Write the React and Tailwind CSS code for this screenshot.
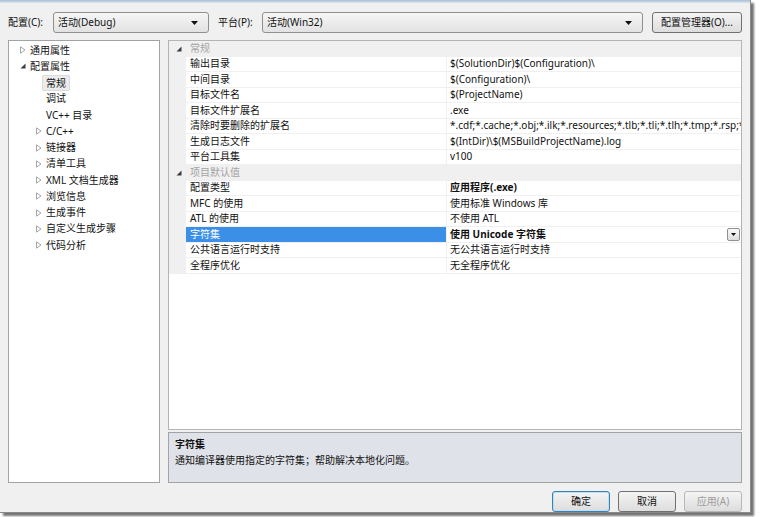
const FONT = { fontFamily: '"Noto Sans", "Noto Sans CJK SC", sans-serif' };

function Collapsed() {
  return (
    <svg width="6" height="8" viewBox="0 0 6 8" className="shrink-0">
      <path d="M0.5 0.8 L5 4 L0.5 7.2 Z" fill="#fff" stroke="#a6a6a6" strokeWidth="1" />
    </svg>
  );
}

function Expanded() {
  return (
    <svg width="6" height="6" viewBox="0 0 6 6" className="shrink-0">
      <path d="M5.5 0.5 L5.5 5.5 L0.5 5.5 Z" fill="#3c3c3c" />
    </svg>
  );
}

function DownArrow() {
  return (
    <svg width="7" height="4" viewBox="0 0 7 4">
      <path d="M0 0 L7 0 L3.5 4 Z" fill="#111" />
    </svg>
  );
}

function Combo({ width, text }) {
  return (
    <div
      className={`${width} h-[21px] flex items-center justify-between rounded-[3px] border border-[#8f9091] bg-gradient-to-b from-[#f6f6f6] to-[#e2e2e2] pl-[4px] pr-[10px] text-[10px] text-[#111]`}
    >
      <span>{text}</span>
      <DownArrow />
    </div>
  );
}

const tree = [
  { label: '通用属性', level: 0, icon: 'c' },
  { label: '配置属性', level: 0, icon: 'e' },
  { label: '常规', level: 1, selected: true },
  { label: '调试', level: 1 },
  { label: 'VC++ 目录', level: 1 },
  { label: 'C/C++', level: 1, icon: 'c' },
  { label: '链接器', level: 1, icon: 'c' },
  { label: '清单工具', level: 1, icon: 'c' },
  { label: 'XML 文档生成器', level: 1, icon: 'c' },
  { label: '浏览信息', level: 1, icon: 'c' },
  { label: '生成事件', level: 1, icon: 'c' },
  { label: '自定义生成步骤', level: 1, icon: 'c' },
  { label: '代码分析', level: 1, icon: 'c' },
];

const grid = [
  { cat: '常规' },
  { name: '输出目录', value: '$(SolutionDir)$(Configuration)\\' },
  { name: '中间目录', value: '$(Configuration)\\' },
  { name: '目标文件名', value: '$(ProjectName)' },
  { name: '目标文件扩展名', value: '.exe' },
  {
    name: '清除时要删除的扩展名',
    value: '*.cdf;*.cache;*.obj;*.ilk;*.resources;*.tlb;*.tli;*.tlh;*.tmp;*.rsp;*.pgc;*.pgd;*.meta;$(TargetPath)',
  },
  { name: '生成日志文件', value: '$(IntDir)\\$(MSBuildProjectName).log' },
  { name: '平台工具集', value: 'v100' },
  { cat: '项目默认值' },
  { name: '配置类型', value: '应用程序(.exe)', bold: true },
  { name: 'MFC 的使用', value: '使用标准 Windows 库' },
  { name: 'ATL 的使用', value: '不使用 ATL' },
  { name: '字符集', value: '使用 Unicode 字符集', bold: true, selected: true },
  { name: '公共语言运行时支持', value: '无公共语言运行时支持' },
  { name: '全程序优化', value: '无全程序优化' },
];

function TreeRow({ item }) {
  const indent = item.level === 0 ? 'pl-[11px]' : 'pl-[27px]';
  return (
    <div className={`h-[16.25px] flex items-center ${indent}`}>
      <div className="w-[10px] flex items-center">
        {item.icon === 'c' && <Collapsed />}
        {item.icon === 'e' && <Expanded />}
      </div>
      {item.selected ? (
        <span className="-ml-[4px] rounded-[2px] border border-[#dadada] bg-[#ececec] px-[3px] leading-[14px]">
          {item.label}
        </span>
      ) : (
        <span>{item.label}</span>
      )}
    </div>
  );
}

function GridRow({ row }) {
  if (row.cat) {
    return (
      <div className="h-[15.5px] flex items-center bg-[#f0f0f0]">
        <div className="w-[17px] flex items-center justify-center pl-[2px]">
          <Expanded />
        </div>
        <span className="pl-[4px] text-[#a3a3a3]">{row.cat}</span>
      </div>
    );
  }
  return (
    <div className="h-[15.5px] flex bg-[#f0f0f0]">
      <div className="w-[17px] shrink-0" />
      <div
        className={`w-[260px] shrink-0 flex items-center pl-[4px] border-b border-[#f0f0f0] ${
          row.selected ? 'bg-[#3b8fe6] text-white' : 'bg-white'
        }`}
      >
        {row.name}
      </div>
      <div
        className={`flex-1 min-w-0 flex items-center pl-[3px] border-b border-l border-[#f0f0f0] bg-white overflow-hidden whitespace-nowrap ${
          row.bold ? 'font-bold' : ''
        }`}
      >
        <span className="flex-1 overflow-hidden">{row.value}</span>
        {row.selected && (
          <div className="mr-[1px] h-[13px] w-[13px] shrink-0 flex items-center justify-center rounded-[2px] border border-[#8f9091] bg-gradient-to-b from-[#fafafa] to-[#dedede]">
            <svg width="5" height="3" viewBox="0 0 5 3">
              <path d="M0 0 L5 0 L2.5 3 Z" fill="#111" />
            </svg>
          </div>
        )}
      </div>
    </div>
  );
}

function Button({ children, variant }) {
  const look =
    variant === 'default'
      ? 'border-[#3c7fb1] text-[#111] shadow-[inset_0_0_0_1px_#b8e0f6]'
      : variant === 'disabled'
      ? 'border-[#b8b8b8] text-[#9c9c9c]'
      : 'border-[#707070] text-[#111]';
  return (
    <div
      className={`w-[58px] h-[21px] flex items-center justify-center rounded-[3px] border bg-gradient-to-b from-[#f4f4f4] to-[#dddddd] ${look}`}
    >
      {children}
    </div>
  );
}

export default function App() {
  return (
    <div className="w-[760px] h-[517px] bg-white overflow-hidden text-[10px] text-[#111]" style={FONT}>
      <div className="w-[751px] h-[513px] flex flex-col bg-[#f0f0f0] border-r border-b border-[#8a8a8a] shadow-[3px_3px_2px_rgba(0,0,0,0.55)]">
        <div className="h-[3px] bg-gradient-to-b from-[#a8bed5] to-[#dce6f0]" />
        <div className="mt-[9px] flex items-center pl-[8px]">
          <span className="w-[45px]">配置(C):</span>
          <Combo width="w-[156px]" text="活动(Debug)" />
          <span className="ml-[9px] w-[44px]">平台(P):</span>
          <Combo width="w-[381px]" text="活动(Win32)" />
          <div className="ml-[9px] w-[90px] h-[21px] flex items-center justify-center rounded-[3px] border border-[#707070] bg-gradient-to-b from-[#f4f4f4] to-[#dddddd]">
            配置管理器(O)...
          </div>
        </div>
        <div className="mt-[7px] flex gap-[8px] pl-[8px] pr-[8px] h-[443px]">
          <div className="w-[152px] shrink-0 border border-[#a3a3a3] bg-white pt-[1px]">
            {tree.map((item) => (
              <TreeRow key={item.label} item={item} />
            ))}
          </div>
          <div className="flex-1 flex flex-col min-w-0">
            <div className="h-[390px] border border-[#b4b4b4] bg-white overflow-hidden">
              {grid.map((row) => (
                <GridRow key={row.cat || row.name} row={row} />
              ))}
            </div>
            <div className="mt-[2px] h-[51px] border border-[#a3a3a3] bg-[#dfe2e8] px-[6px] pt-[3px]">
              <div className="font-bold leading-[16px]">字符集</div>
              <div className="leading-[16px]">通知编译器使用指定的字符集；帮助解决本地化问题。</div>
            </div>
          </div>
        </div>
        <div className="mt-[8px] flex justify-end gap-[8px] pr-[8px]">
          <Button variant="default">确定</Button>
          <Button>取消</Button>
          <Button variant="disabled">应用(A)</Button>
        </div>
      </div>
    </div>
  );
}
